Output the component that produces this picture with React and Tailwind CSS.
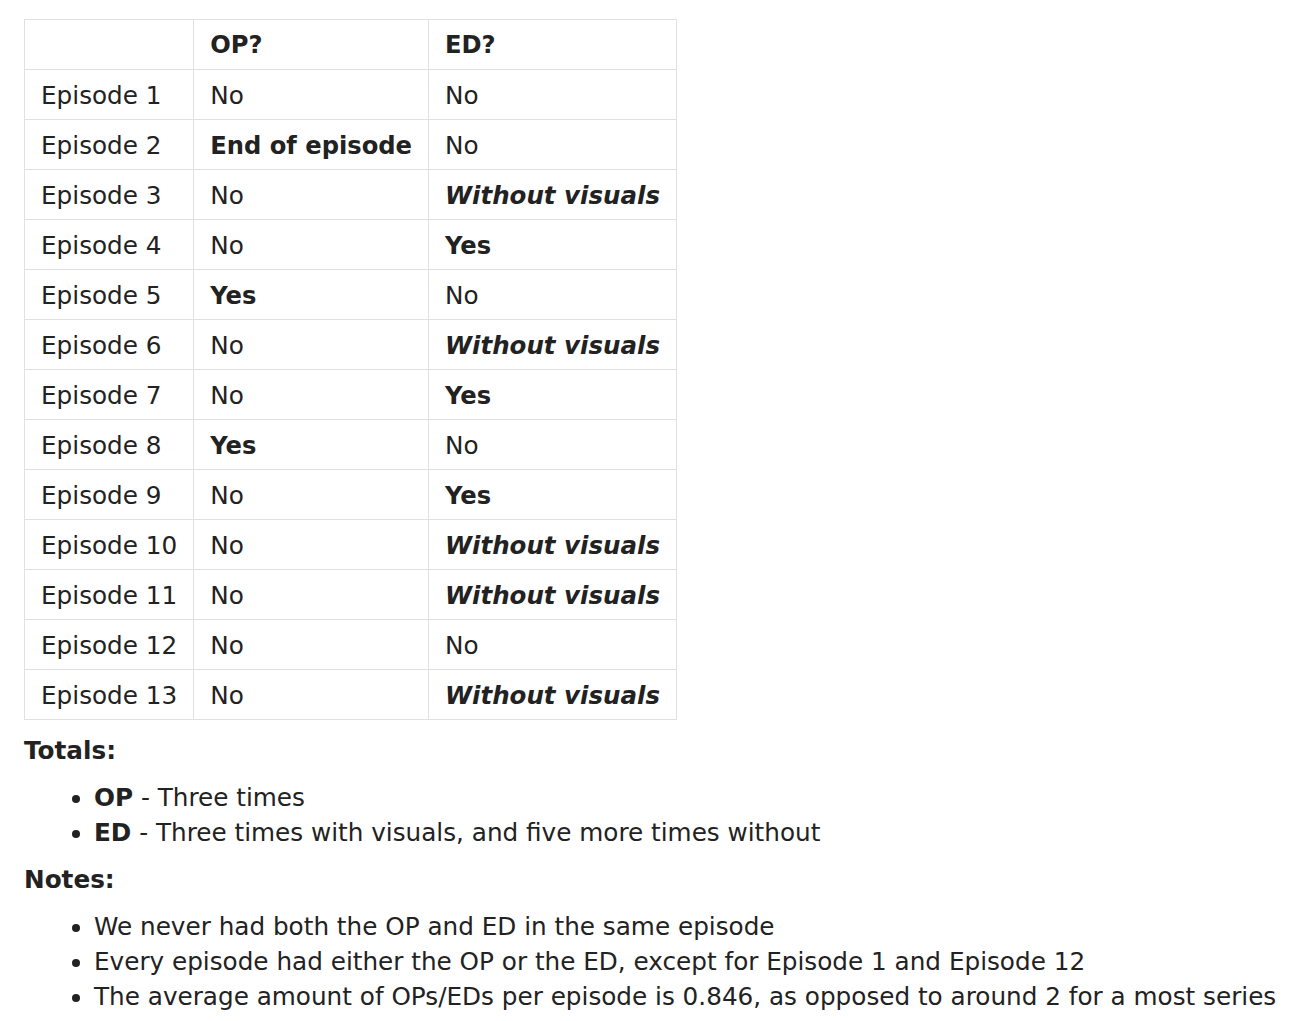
const rows = [
  ['Episode 1', 'No', 'No'],
  ['Episode 2', { b: 'End of episode' }, 'No'],
  ['Episode 3', 'No', { bi: 'Without visuals' }],
  ['Episode 4', 'No', { b: 'Yes' }],
  ['Episode 5', { b: 'Yes' }, 'No'],
  ['Episode 6', 'No', { bi: 'Without visuals' }],
  ['Episode 7', 'No', { b: 'Yes' }],
  ['Episode 8', { b: 'Yes' }, 'No'],
  ['Episode 9', 'No', { b: 'Yes' }],
  ['Episode 10', 'No', { bi: 'Without visuals' }],
  ['Episode 11', 'No', { bi: 'Without visuals' }],
  ['Episode 12', 'No', 'No'],
  ['Episode 13', 'No', { bi: 'Without visuals' }],
]

function Cell({ value }) {
  let content = value
  if (value && value.b) content = <strong className="text-[24.2px] font-bold">{value.b}</strong>
  if (value && value.bi) content = <strong className="text-[24.5px] font-bold italic">{value.bi}</strong>
  return <td className="h-[50px] border border-[#e2e0dc] px-4 pt-[2px] pb-0 align-middle">{content}</td>
}

export default function App() {
  return (
    <div className="min-h-screen bg-white px-6 pt-[19px] text-[24.7px] leading-[35px] text-[#222222]" style={{ fontFamily: '"DejaVu Sans", Verdana, sans-serif' }}>
      <table className="border-collapse">
        <thead>
          <tr>
            <th className="h-[50px] border border-[#e2e0dc] px-4 pt-[2px] pb-0 text-left text-[24.2px] font-bold"></th>
            <th className="h-[50px] border border-[#e2e0dc] px-4 pt-[2px] pb-0 text-left text-[24.2px] font-bold">OP?</th>
            <th className="h-[50px] border border-[#e2e0dc] px-4 pt-[2px] pb-0 text-left text-[24.2px] font-bold">ED?</th>
          </tr>
        </thead>
        <tbody>
          {rows.map((r) => (
            <tr key={r[0]}>
              <Cell value={r[0]} />
              <Cell value={r[1]} />
              <Cell value={r[2]} />
            </tr>
          ))}
        </tbody>
      </table>

      <p className="mt-[13px] font-bold">Totals:</p>
      <ul className="mt-3 list-disc pl-[70px]">
        <li><strong className="font-bold">OP</strong> - Three times</li>
        <li><strong className="font-bold">ED</strong> - Three times with visuals, and five more times without</li>
      </ul>

      <p className="mt-3 font-bold">Notes:</p>
      <ul className="mt-3 list-disc pl-[70px]">
        <li>We never had both the OP and ED in the same episode</li>
        <li>Every episode had either the OP or the ED, except for Episode 1 and Episode 12</li>
        <li>The average amount of OPs/EDs per episode is 0.846, as opposed to around 2 for a most series</li>
      </ul>
    </div>
  )
}
